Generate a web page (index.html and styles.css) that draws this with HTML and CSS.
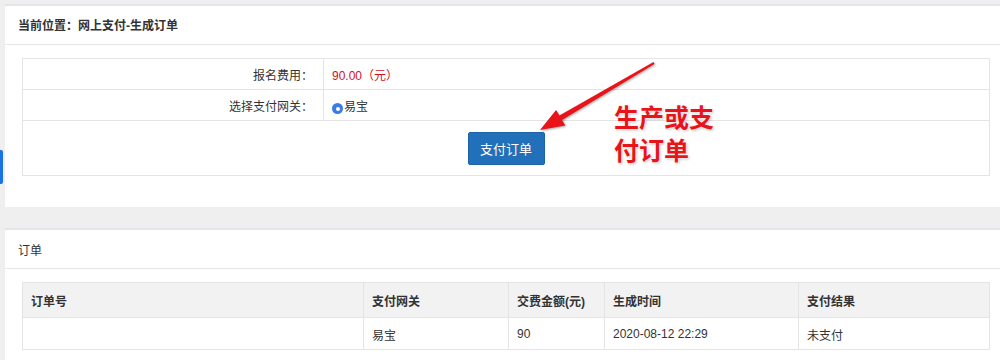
FILE: index.html
```html
<!DOCTYPE html>
<html lang="zh-CN">
<head>
  <meta charset="UTF-8">
  <title>网上支付-生成订单</title>
  <link rel="stylesheet" href="styles.css">
</head>
<body>
<!-- 生成订单 -->
<div class="panel">
  <div class="panel-head bold">当前位置：网上支付-生成订单</div>
  <div class="panel-body">
    <table class="form-table">
      <tr>
        <td class="label">报名费用：</td>
        <td class="value price">90.00（元）</td>
      </tr>
      <tr>
        <td class="label">选择支付网关：</td>
        <td class="value"><span class="radio"></span>易宝</td>
      </tr>
      <tr>
        <td class="btn-row" colspan="2"><button class="btn">支付订单</button></td>
      </tr>
    </table>
  </div>
</div>

<!-- 订单列表 -->
<div class="panel second">
  <div class="panel-head">订单</div>
  <div class="panel-body">
    <table class="list-table">
      <thead>
      <tr>
        <th class="c1">订单号</th>
        <th class="c2">支付网关</th>
        <th class="c3">交费金额(元)</th>
        <th class="c4">生成时间</th>
        <th class="c5">支付结果</th>
      </tr>
      </thead>
      <tbody>
      <tr>
        <td></td>
        <td>易宝</td>
        <td>90</td>
        <td>2020-08-12 22:29</td>
        <td>未支付</td>
      </tr>
      </tbody>
    </table>
  </div>
</div>

<!-- 侧边标签 -->
<div class="side-tab"></div>

<!-- 截图标注 -->
<svg class="arrow" width="1000" height="360" viewBox="0 0 1000 360">
  <polygon points="653.5,62.1 559.4,115.6 556.1,110 540,130 565.3,125.6 562,120 654.5,63.9" fill="#e8141a"/>
</svg>
<div class="note">生产或支<br>付订单</div>
</body>
</html>
```

FILE: styles.css
```css
body {
  margin: 0;
  padding: 4px 0 0 0;
  background-color: #efefef;
  font-family: "Liberation Sans", "Noto Sans CJK SC", sans-serif;
  font-size: 12px;
  color: #333;
  position: relative;
  height: 356px;
  overflow: hidden;
}
.panel {
  margin-left: 5px;
  margin-right: -8px;
  background-color: #fff;
  border-top: 2px solid #e2e5e9;
}
.panel.second {
  margin-top: 21px;
}
.panel-head {
  height: 35px;
  line-height: 35px;
  padding: 3px 0 0 13px;
  border-bottom: 1px solid #e6e6e6;
  color: #333;
}
.panel.second .panel-head {
  height: 35px;
  line-height: 36px;
}
.bold {
  font-weight: bold;
}
.panel-body {
  padding: 13px 17px 31px 17px;
}
table {
  width: 968px;
  border-collapse: collapse;
}
td, th {
  border: 1px solid #e4e4e4;
  padding: 0 8px;
  text-align: left;
}
.form-table td {
  height: 29px;
  padding-top: 1px;
}
.form-table .label {
  width: 282px;
  text-align: right;
  padding-right: 10px;
}
.price {
  color: #d0111b;
}
.radio {
  display: inline-block;
  width: 11px;
  height: 11px;
  border-radius: 50%;
  background-color: #3a7be6;
  vertical-align: -3px;
  margin-right: 1px;
  position: relative;
}
.radio::after {
  content: "";
  position: absolute;
  left: 3.5px;
  top: 3.5px;
  width: 4px;
  height: 4px;
  border-radius: 50%;
  background-color: #fff;
}
.form-table .btn-row {
  height: 55px;
  text-align: center;
  vertical-align: top;
  padding-top: 11px;
  box-sizing: border-box;
}
.btn {
  width: 77px;
  height: 33px;
  border: 1px solid #1b64a6;
  border-radius: 2px;
  background-color: #2170b9;
  color: #fff;
  font-family: "Liberation Sans", "Noto Sans CJK SC", sans-serif;
  font-size: 13px;
  cursor: pointer;
}
.list-table th {
  height: 33px;
  background-color: #f2f2f3;
  font-weight: bold;
  padding-top: 1px;
}
.list-table td {
  height: 30px;
  padding-top: 1px;
}
.c1 { width: 324px; }
.c2 { width: 128px; }
.c3 { width: 79px; }
.c4 { width: 177px; }
.side-tab {
  position: absolute;
  left: 0;
  top: 150px;
  width: 3px;
  height: 34px;
  background-color: #1b73e4;
  border-radius: 0 2px 2px 0;
}
.arrow {
  position: absolute;
  left: 0;
  top: 0;
  filter: drop-shadow(1px 1px 1px rgba(0,0,0,0.35));
}
.note {
  position: absolute;
  left: 614px;
  top: 100px;
  font-family: "Noto Sans CJK SC", sans-serif;
  font-size: 25px;
  font-weight: bold;
  line-height: 33px;
  color: #e8141a;
  text-shadow: 0 0 2px #fff, 0 0 2px #fff, 1px 1px 3px rgba(0,0,0,0.3);
}
```
